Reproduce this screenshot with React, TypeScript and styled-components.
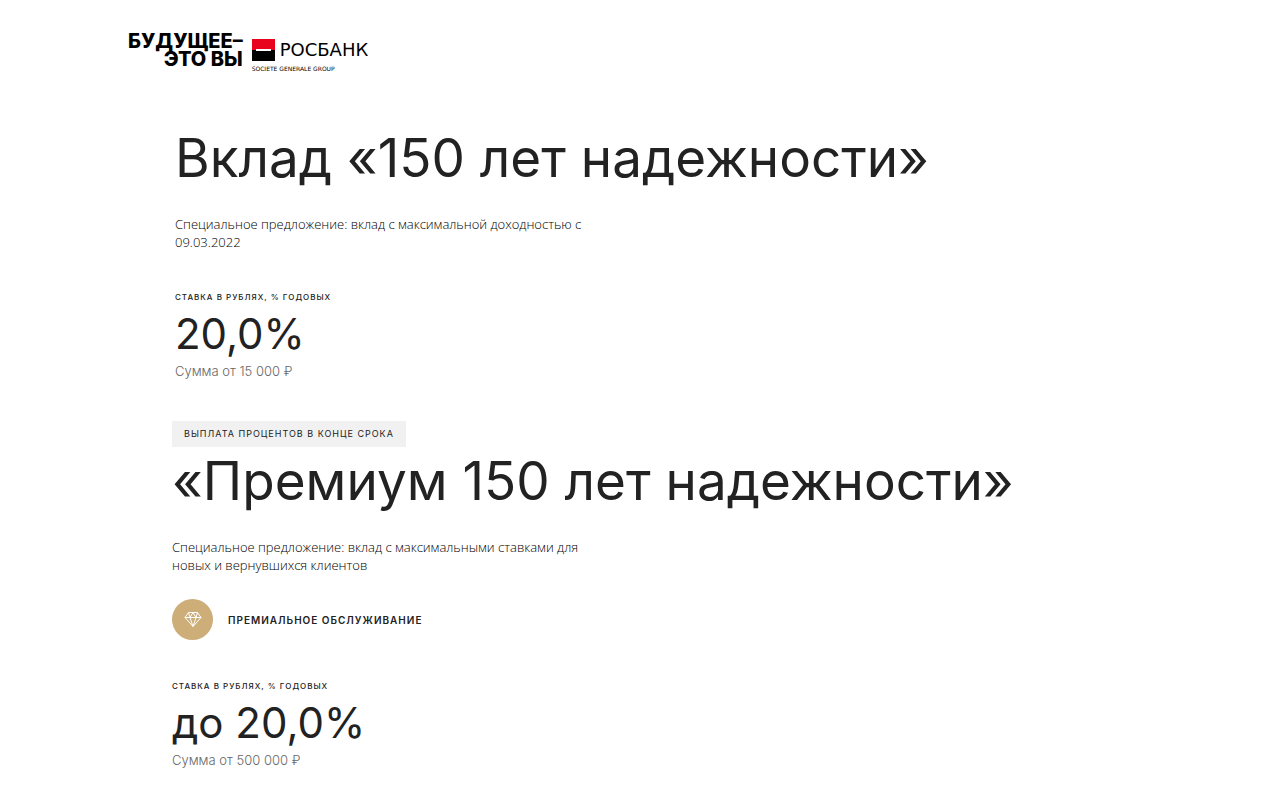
import React from "react";
import styled, { createGlobalStyle } from "styled-components";

const GlobalStyle = createGlobalStyle`
  * { box-sizing: border-box; }
  body {
    margin: 0;
    background: #ffffff;
    color: #222222;
    font-family: Inter, "Noto Sans", sans-serif;
  }
  h1, h2, p { margin: 0; }
`;

const Page = styled.div`
  min-height: 100vh;
  padding-bottom: 16px;
`;

const Header = styled.header`
  padding: 32px 24px 0 128px;
`;

const LogoLink = styled.a`
  display: inline-flex;
  align-items: flex-start;
  gap: 9px;
  color: #000000;
  text-decoration: none;
`;

const Slogan = styled.span`
  display: flex;
  flex-direction: column;
  align-items: flex-end;
  font-size: 20px;
  font-weight: 800;
  line-height: 18px;
  white-space: nowrap;
`;

const Bank = styled.span`
  display: flex;
  flex-direction: column;
  gap: 4px;
  padding-top: 7px;
`;

const BankRow = styled.span`
  display: flex;
  align-items: center;
  gap: 5px;
`;

const BankName = styled.span`
  font-family: "DejaVu Sans", sans-serif;
  font-size: 18px;
  line-height: 22px;
`;

const BankGroup = styled.span`
  font-family: "DejaVu Sans", sans-serif;
  font-size: 6px;
  line-height: 8px;
  white-space: nowrap;
`;

const Main = styled.main`
  padding: 53px 24px 0 172px;
`;

const Deposit = styled.section<{ $inset?: boolean }>`
  padding-left: ${(p) => (p.$inset ? "3px" : "0")};
`;

const Title = styled.h1`
  font-size: 53px;
  font-weight: 400;
  line-height: 64px;
`;

const Description = styled.p`
  max-width: 440px;
  margin-top: 25px;
  color: #000000;
  font-family: "Open Sans", "Noto Sans", sans-serif;
  font-size: 13px;
  font-weight: 300;
  line-height: 18px;
`;

const Service = styled.div`
  display: flex;
  align-items: center;
  gap: 15px;
  margin-top: 25px;
  font-size: 10px;
  font-weight: 600;
  line-height: 16px;
  letter-spacing: 1px;
`;

const ServiceIcon = styled.span`
  display: flex;
  align-items: center;
  justify-content: center;
  width: 41px;
  height: 41px;
  border-radius: 50%;
  background: #cdad78;
`;

const Rate = styled.div`
  margin-top: 40px;
`;

const RateLabel = styled.p`
  font-size: 8px;
  font-weight: 500;
  line-height: 12px;
  letter-spacing: 1px;
`;

const RateValue = styled.p`
  margin-top: 6px;
  font-size: 42px;
  font-weight: 400;
  line-height: 50px;
`;

const RateNote = styled.p`
  margin-top: 3px;
  color: #666666;
  font-size: 13px;
  font-weight: 300;
  line-height: 18px;
`;

const Tag = styled.p`
  width: fit-content;
  margin: 41px 0 2px;
  padding: 5px 12px;
  background: #f1f1f1;
  font-size: 9px;
  line-height: 16px;
  letter-spacing: 1px;
`;

function BankMark() {
  return (
    <svg width="23" height="22" viewBox="0 0 23 22" aria-hidden="true">
      <rect width="23" height="11" fill="#e9041e" />
      <rect y="11" width="23" height="11" fill="#000000" />
      <rect x="4" y="10" width="15" height="2" fill="#ffffff" />
    </svg>
  );
}

function Diamond() {
  return (
    <svg width="18" height="17" viewBox="0 0 18 17" fill="none" stroke="#ffffff" strokeLinejoin="round" aria-hidden="true">
      <path d="M4.5 1.5h9l3.5 5-8 9-8-9zM1 6.5h16M6 6.5l3 9 3-9M4.5 1.5l1.5 5 3-5 3 5 1.5-5" />
    </svg>
  );
}

function RateBlock({ value, note }: { value: string; note: string }) {
  return (
    <Rate>
      <RateLabel>СТАВКА В РУБЛЯХ, % ГОДОВЫХ</RateLabel>
      <RateValue>{value}</RateValue>
      <RateNote>{note}</RateNote>
    </Rate>
  );
}

export default function App() {
  return (
    <Page>
      <GlobalStyle />
      <Header>
        <LogoLink href="#" aria-label="Росбанк">
          <Slogan>
            <span>БУДУЩЕЕ–</span>
            <span>ЭТО ВЫ</span>
          </Slogan>
          <Bank>
            <BankRow>
              <BankMark />
              <BankName>РОСБАНК</BankName>
            </BankRow>
            <BankGroup>SOCIETE GENERALE GROUP</BankGroup>
          </Bank>
        </LogoLink>
      </Header>
      <Main>
        <Deposit $inset>
          <Title>Вклад «150 лет надежности»</Title>
          <Description>
            Специальное предложение: вклад с максимальной доходностью с 09.03.2022
          </Description>
          <RateBlock value="20,0%" note="Сумма от 15 000 ₽" />
        </Deposit>
        <Tag>ВЫПЛАТА ПРОЦЕНТОВ В КОНЦЕ СРОКА</Tag>
        <Deposit>
          <Title as="h2">«Премиум 150 лет надежности»</Title>
          <Description>
            Специальное предложение: вклад с максимальными ставками для новых и вернувшихся клиентов
          </Description>
          <Service>
            <ServiceIcon>
              <Diamond />
            </ServiceIcon>
            ПРЕМИАЛЬНОЕ ОБСЛУЖИВАНИЕ
          </Service>
          <RateBlock value="до 20,0%" note="Сумма от 500 000 ₽" />
        </Deposit>
      </Main>
    </Page>
  );
}
